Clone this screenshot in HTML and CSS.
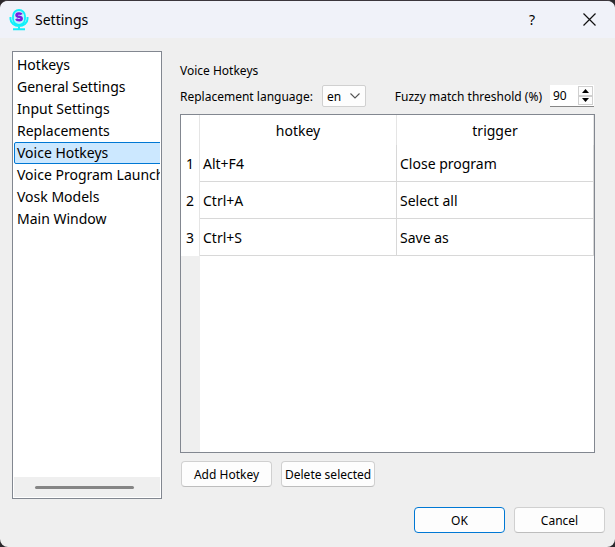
FILE: index.html
```html
<!DOCTYPE html>
<html lang="en">
<head>
    <meta charset="UTF-8">
    <meta name="viewport" content="width=device-width, initial-scale=1.0">
    <title>Settings</title>
    <link rel="stylesheet" href="styles.css">
</head>
<body>
    <div class="window">
        <header class="titlebar">
            <svg class="app-icon" width="20" height="22" viewBox="0 0 20 22">
                <rect x="4" y="1" width="12" height="15" rx="6" fill="#bdf3fb" stroke="#0ff0fa" stroke-width="1.8"/>
                <path d="M1.500 8v2a8.500 7 0 0 0 17 0V8M10 17v3M4 20.200h12" fill="none" stroke="#0ff0fa" stroke-width="2"/>
                <path d="M12.600 5.500C12 4.200 7.500 4 7.500 6.200S12.700 7.200 12.700 9.500 8 11.400 7.200 9.900" fill="none" stroke="#7a1fe0" stroke-width="2.500"/>
            </svg>
            <h1>Settings</h1>
            <button class="title-btn" type="button" aria-label="Help">?</button>
            <button class="title-btn" type="button" aria-label="Close">
                <svg width="13" height="13" viewBox="0 0 13 13">
                    <path d="M.5.5l12 12M12.500.5l-12 12" fill="none" stroke="#111" stroke-width="1.200"/>
                </svg>
            </button>
        </header>

        <main class="content">
            <nav class="sidebar">
                <ul class="pages">
                    <li><a href="#">Hotkeys</a></li>
                    <li><a href="#">General Settings</a></li>
                    <li><a href="#">Input Settings</a></li>
                    <li><a href="#">Replacements</a></li>
                    <li><a href="#" class="selected">Voice Hotkeys</a></li>
                    <li><a href="#">Voice Program Launcher</a></li>
                    <li><a href="#">Vosk Models</a></li>
                    <li><a href="#">Main Window</a></li>
                </ul>
                <div class="scrollbar"><div class="thumb"></div></div>
            </nav>

            <section class="panel">
                <h2>Voice Hotkeys</h2>
                <div class="options">
                    <label for="language">Replacement language:</label>
                    <div class="select">
                        <select id="language">
                            <option>en</option>
                        </select>
                        <svg class="chevron" width="10" height="6" viewBox="0 0 10 6">
                            <path d="M.5.5L5 5 9.500.5" fill="none" stroke="#555" stroke-width="1.100"/>
                        </svg>
                    </div>
                    <label class="threshold-label" for="threshold">Fuzzy match threshold (%)</label>
                    <div class="spinbox">
                        <input id="threshold" type="text" inputmode="numeric" value="90">
                        <div class="spin-buttons">
                            <button type="button" aria-label="Increase">
                                <svg width="7" height="4" viewBox="0 0 7 4"><path d="M0 4L3.500 0 7 4z"/></svg>
                            </button>
                            <button type="button" aria-label="Decrease">
                                <svg width="7" height="4" viewBox="0 0 7 4"><path d="M0 0L3.500 4 7 0z"/></svg>
                            </button>
                        </div>
                    </div>
                </div>

                <div class="table-view">
                    <table>
                        <thead>
                            <tr><th class="num"></th><th>hotkey</th><th>trigger</th></tr>
                        </thead>
                        <tbody>
                            <tr><th class="num">1</th><td>Alt+F4</td><td>Close program</td></tr>
                            <tr><th class="num">2</th><td>Ctrl+A</td><td>Select all</td></tr>
                            <tr><th class="num">3</th><td>Ctrl+S</td><td>Save as</td></tr>
                        </tbody>
                    </table>
                    <div class="gutter"></div>
                </div>

                <div class="actions">
                    <button class="btn" type="button">Add Hotkey</button>
                    <button class="btn" type="button">Delete selected</button>
                </div>
            </section>
        </main>

        <footer class="dialog-buttons">
            <button class="btn btn-default" type="button">OK</button>
            <button class="btn" type="button">Cancel</button>
        </footer>
    </div>
</body>
</html>
```

FILE: styles.css
```css
* {
    margin: 0;
    padding: 0;
    box-sizing: border-box;
}

body {
    background: #2b282c;
    font-family: "Noto Sans", "Segoe UI", Tahoma, sans-serif;
    font-size: 12px;
    color: #000;
}

button, input, select {
    font: inherit;
    color: inherit;
}

.window {
    display: flex;
    flex-direction: column;
    min-height: 100vh;
    border-top: 1px solid #3b363c;
    border-radius: 8px;
    background: #efefef;
    overflow: hidden;
}

.titlebar {
    display: flex;
    align-items: center;
    height: 37px;
    padding-left: 9px;
    background: #f0f2f9;
}

.titlebar h1 {
    flex: 1;
    margin-left: 6px;
    font-size: 14px;
    font-weight: 400;
}

.title-btn {
    display: flex;
    align-items: center;
    justify-content: center;
    width: 62px;
    height: 36px;
    border: none;
    background: none;
    font-size: 14px;
}

.title-btn:last-child {
    width: 52px;
}

.content {
    flex: 1;
    display: flex;
    gap: 18px;
    padding: 13px 20px 0 12px;
}

.sidebar {
    display: flex;
    flex-direction: column;
    width: 150px;
    padding: 2px 1px 1px;
    border: 1px solid #828790;
    background: #fff;
    font-size: 14px;
}

.pages {
    flex: 1;
    list-style: none;
    overflow: hidden;
}

.pages a {
    display: block;
    width: 180px;
    height: 22px;
    padding-left: 2px;
    border: 1px solid transparent;
    border-radius: 2px;
    line-height: 20px;
    color: #000;
    text-decoration: none;
    white-space: nowrap;
}

.pages a.selected {
    border-color: #0078d4;
    background: #cce8ff;
}

.scrollbar {
    display: flex;
    align-items: center;
    height: 20px;
    padding: 0 26px 0 21px;
    background: #efefef;
}

.thumb {
    flex: 1;
    height: 3px;
    border-radius: 2px;
    background: #858585;
}

.panel {
    flex: 1;
    display: flex;
    flex-direction: column;
    min-width: 0;
    padding-top: 10px;
}

.panel h2 {
    font-size: 12px;
    font-weight: 400;
    line-height: 20px;
}

.options {
    display: flex;
    align-items: center;
    height: 22px;
    margin: 4px 0 7px;
    white-space: nowrap;
}

.select {
    position: relative;
    margin-left: 9px;
}

.select select {
    display: block;
    width: 44px;
    height: 22px;
    padding-left: 4px;
    border: 1px solid #d0d0d0;
    border-radius: 2px;
    background: #fdfdfd;
    appearance: none;
}

.chevron {
    position: absolute;
    top: 8px;
    right: 6px;
    pointer-events: none;
}

.threshold-label {
    margin-left: auto;
}

.spinbox {
    display: flex;
    width: 44px;
    height: 22px;
    margin: 0 1px 0 8px;
    padding: 1px;
    border-bottom: 1px solid #868686;
    background: #fff;
}

.spinbox input {
    width: 27px;
    padding-left: 2px;
    border: none;
    background: none;
}

.spin-buttons {
    flex: 1;
    display: flex;
    flex-direction: column;
}

.spin-buttons button {
    flex: 1;
    display: flex;
    align-items: center;
    justify-content: center;
    border: 1px solid #d0d0d0;
    background: #fdfdfd;
}

.table-view {
    flex: 1;
    display: flex;
    flex-direction: column;
    border: 1px solid #828790;
    background: #fff;
    font-size: 14px;
}

table {
    width: 100%;
    border-collapse: separate;
    border-spacing: 0;
    table-layout: fixed;
}

th, td {
    height: 37px;
    border-right: 1px solid #d8d8d8;
    font-weight: 400;
}

thead th {
    height: 30px;
    border-color: #e5e5e5;
}

td {
    padding-left: 3px;
    border-bottom: 1px solid #d8d8d8;
    text-align: left;
}

.num {
    width: 19px;
    border-color: #e5e5e5;
}

.gutter {
    flex: 1;
    width: 19px;
    background: #efefef;
}

.actions {
    display: flex;
    gap: 9px;
    padding: 8px 0 12px 1px;
}

.btn {
    min-width: 91px;
    height: 26px;
    padding: 0 3px;
    border: 1px solid #d0d0d0;
    border-bottom-color: #bdbdbd;
    border-radius: 4px;
    background: #fdfdfd;
}

.btn-default {
    border-color: #0078d4;
}

.dialog-buttons {
    display: flex;
    justify-content: flex-end;
    gap: 9px;
    padding: 8px 10px 14px;
}
```
